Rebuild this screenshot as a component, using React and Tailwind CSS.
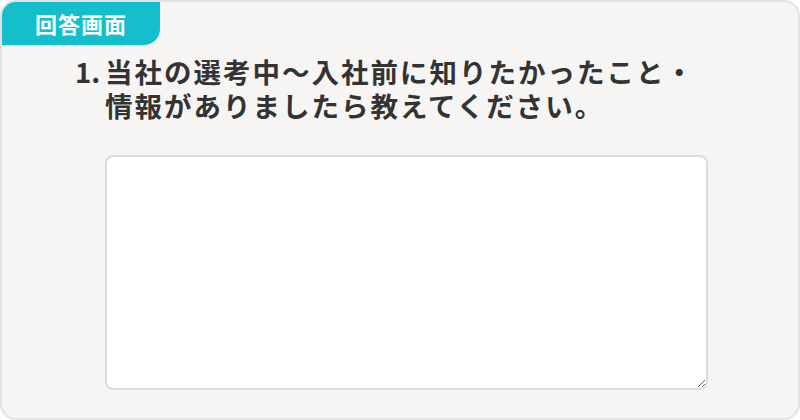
import React from "react";

export default function App() {
  return (
    <div className="w-[800px] h-[420px] bg-white" style={{ fontFamily: '"Noto Sans CJK JP", "Noto Sans", sans-serif' }}>
      <div className="w-full h-full rounded-[16px] border-2 border-[#e2e2e2] bg-[#f6f5f3] overflow-hidden flex flex-col">
        <div className="w-[158px] h-[43px] bg-[#14bfcb] rounded-br-[16px] flex items-center justify-center text-white text-[22px] font-bold tracking-[1px] shrink-0">
          回答画面
        </div>
        <div className="flex mt-[9px] pl-[73px] text-[#333333] text-[27.5px] font-bold leading-[34px] tracking-[2px]">
          <span className="w-[30px] shrink-0 tracking-normal">1.</span>
          <p className="w-[660px]">
            当社の選考中〜入社前に知りたかったこと・
            <br />
            情報がありましたら教えてください。
          </p>
        </div>
        <div className="pl-[103px] mt-[33px]">
          <textarea className="block w-[603px] h-[235px] bg-white border-2 border-[#dcdcdc] rounded-[8px] resize outline-none" />
        </div>
      </div>
    </div>
  );
}
